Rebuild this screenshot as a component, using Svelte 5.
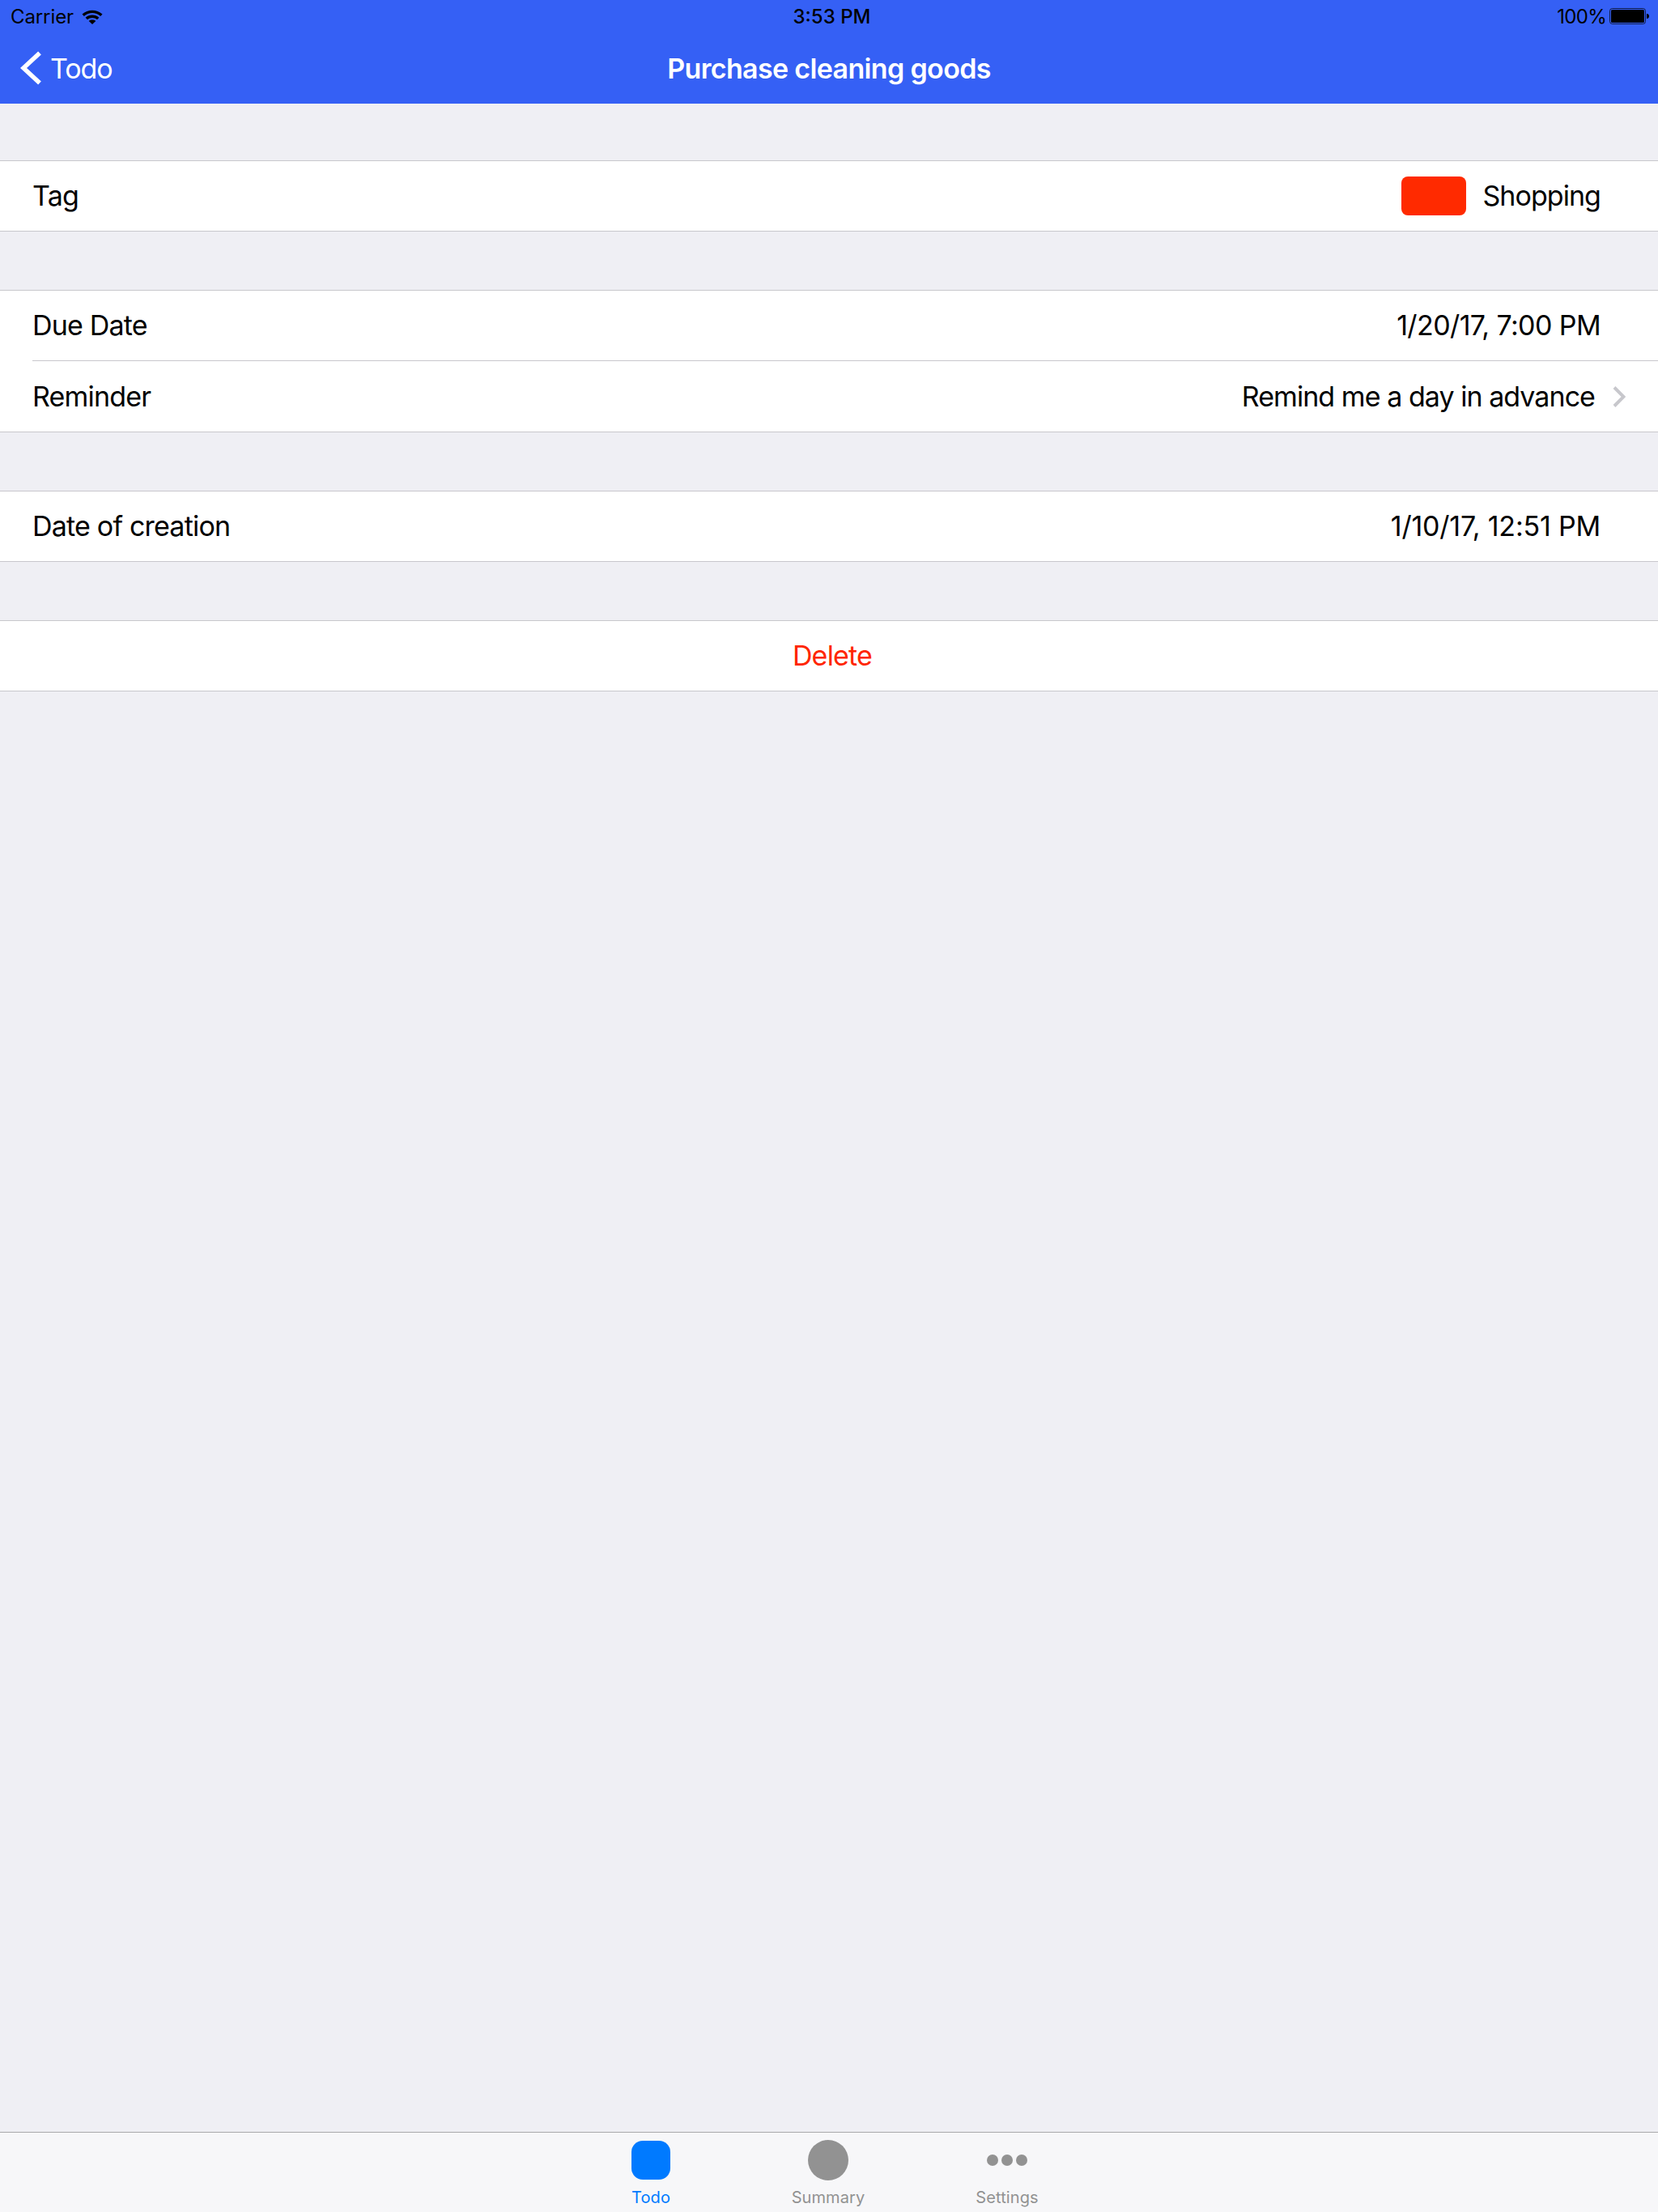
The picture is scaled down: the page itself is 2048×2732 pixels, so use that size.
<script>
  const groups = [
    [{ label: 'Tag', value: 'Shopping', swatch: true }],
    [{ label: 'Due Date', value: '1/20/17, 7:00 PM', date: 'narrow' }, { label: 'Reminder', value: 'Remind me a day in advance', chevron: true }],
    [{ label: 'Date of creation', value: '1/10/17, 12:51 PM', date: 'wide' }]
  ];
</script>

<div class="page">
  <header class="header">
    <div class="status">
      <div class="st-left">
        <span>Carrier</span>
        <svg class="wifi" width="26" height="19" viewBox="0 0 26 19">
          <path d="M0.500 6.500C7.400 0 18.600 0 25.500 6.500l-2.300 2.400C17.400 3.600 8.600 3.600 2.800 8.900z" fill="#000"/>
          <path d="M4.600 10.700c4.800-4.200 12-4.200 16.800 0l-2.400 2.500c-3.500-3-8.500-3-12 0z" fill="#000"/>
          <path d="M8.700 15c2.500-1.900 6.100-1.900 8.600 0L13 19z" fill="#000"/>
        </svg>
      </div>
      <span class="time">3:53 PM</span>
      <div class="st-right">
        <span class="pct">100%</span>
        <svg class="battery" width="49" height="20" viewBox="0 0 49 20">
          <rect x="0.500" y="0.500" width="44" height="19" rx="3" fill="none" stroke="#000" stroke-opacity=".7"/>
          <rect x="2" y="2" width="41" height="16" rx="1.500" fill="#000"/>
          <path d="M46 7c2 0 3 1 3 3s-1 3-3 3z" fill="#000"/>
        </svg>
      </div>
    </div>
    <div class="nav">
      <div class="back">
        <svg width="26" height="42" viewBox="0 0 26 42">
          <path d="M24 2.500 4 21l20 18.500" fill="none" stroke="#fff" stroke-width="5.500"/>
        </svg>
        <span>Todo</span>
      </div>
      <div class="title">Purchase cleaning goods</div>
    </div>
  </header>

  <main class="content">
    {#each groups as group}
      <section class="group">
        {#each group as row}
          <div class="row">
            <div class="row-inner">
              <span class="label">{row.label}</span>
              <div class="value">
                {#if row.swatch}<span class="swatch"></span>{/if}
                <span class:narrow={row.date === 'narrow'} class:wide={row.date === 'wide'}>{row.value}</span>
                {#if row.chevron}
                  <svg class="chevron" width="16" height="26" viewBox="0 0 16 26">
                    <path d="M2 1.500 13.500 13 2 24.500" fill="none" stroke="#c7c7cc" stroke-width="4"/>
                  </svg>
                {/if}
              </div>
            </div>
          </div>
        {/each}
      </section>
    {/each}
    <section class="group">
      <button class="delete">Delete</button>
    </section>
  </main>

  <nav class="tabs">
    <div class="tab active">
      <div class="icon"><span class="rounded"></span></div>
      <span class="tab-label">Todo</span>
    </div>
    <div class="tab">
      <div class="icon"><span class="circle"></span></div>
      <span class="tab-label">Summary</span>
    </div>
    <div class="tab">
      <div class="icon dots"><i></i><i></i><i></i></div>
      <span class="tab-label">Settings</span>
    </div>
  </nav>
</div>

<style>
  :global(body) { margin: 0; }
  .page {
    width: 2048px;
    height: 2732px;
    display: flex;
    flex-direction: column;
    background: #efeff4;
    font-family: Inter, "Liberation Sans", sans-serif;
    color: #000;
    overflow: hidden;
  }
  .header {
    height: 128px;
    flex: none;
    background: #3560f5;
    display: flex;
    flex-direction: column;
  }
  .status {
    height: 40px;
    padding: 1px 11px 0 13px;
    box-sizing: border-box;
    display: grid;
    grid-template-columns: 1fr auto 1fr;
    align-items: center;
    font-size: 24px;
    line-height: 40px;
  }
  .st-left { display: flex; align-items: center; gap: 10px; letter-spacing: -0.1px; }
  .wifi { margin-top: -2px; }
  .time { font-weight: 500; padding-left: 5px; }
  .st-right { display: flex; align-items: center; justify-content: flex-end; gap: 4px; }
  .pct { letter-spacing: -0.7px; }
  .battery { margin-top: -2px; }
  .nav {
    height: 88px;
    position: relative;
    display: flex;
    align-items: center;
    justify-content: center;
    color: #fff;
  }
  .back {
    position: absolute;
    left: 25px;
    top: 0;
    height: 88px;
    display: flex;
    align-items: center;
    gap: 11px;
    font-size: 34px;
    letter-spacing: -1.1px;
  }
  .title {
    font-size: 34px;
    font-weight: 600;
    letter-spacing: -0.65px;
  }
  .content {
    flex: 1;
    padding-top: 70px;
    display: flex;
    flex-direction: column;
    gap: 72px;
  }
  .group {
    background: #fff;
    border-top: 1px solid #c8c7cc;
    border-bottom: 1px solid #c8c7cc;
  }
  .row { padding-left: 40px; }
  .row-inner {
    box-sizing: border-box;
    height: 86px;
    padding-bottom: 1px;
    display: flex;
    align-items: center;
    justify-content: space-between;
    font-size: 34px;
    letter-spacing: -0.8px;
  }
  .row + .row .row-inner {
    height: 88px;
    border-top: 1px solid #c8c7cc;
  }
  .value {
    display: flex;
    align-items: center;
    margin-right: 71px;
    letter-spacing: -0.95px;
  }
  .narrow { letter-spacing: -0.6px; }
  .wide { letter-spacing: -0.2px; }
  .swatch {
    width: 80px;
    height: 48px;
    margin-top: 1px;
    border-radius: 8px;
    background: #ff2a00;
    margin-right: 20px;
  }
  .chevron { margin: 1px -31px 0 22px; }
  .delete {
    display: block;
    width: 100%;
    height: 86px;
    border: 0;
    padding: 0 0 1px 8px;
    background: #fff;
    color: #ff2600;
    font: inherit;
    font-size: 34px;
    letter-spacing: -0.8px;
  }
  .tabs {
    height: 99px;
    flex: none;
    box-sizing: border-box;
    border-top: 1px solid #a9a9ab;
    background: #f7f7f9;
    display: flex;
    justify-content: center;
  }
  .tab {
    width: 220px;
    box-sizing: border-box;
    display: flex;
    flex-direction: column;
    align-items: center;
    color: #929292;
  }
  .tab:nth-child(2) { padding-right: 2px; }
  .tab.active { color: #007aff; }
  .icon {
    height: 50px;
    margin-top: 9px;
    display: flex;
    align-items: center;
    justify-content: center;
  }
  .rounded {
    width: 48px;
    height: 48px;
    border-radius: 14px;
    background: #007aff;
  }
  .circle {
    width: 50px;
    height: 50px;
    border-radius: 50%;
    background: #929292;
  }
  .dots { gap: 4px; }
  .dots i {
    width: 14px;
    height: 14px;
    border-radius: 50%;
    background: #929292;
  }
  .tab-label {
    font-size: 20px;
    line-height: 28px;
    margin-top: 7px;
    letter-spacing: 0.1px;
  }
</style>
